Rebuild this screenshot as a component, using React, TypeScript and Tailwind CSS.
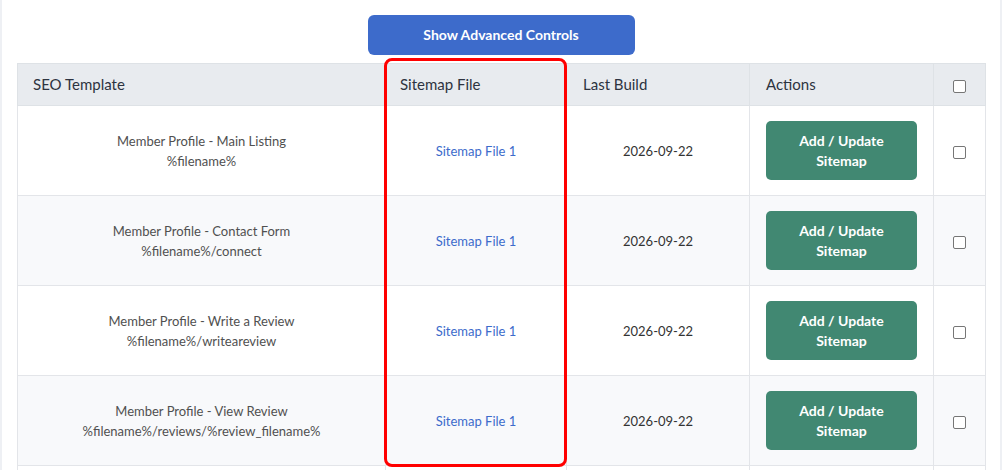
import React from "react";

const rows = [
  { name: "Member Profile - Main Listing", path: "%filename%" },
  { name: "Member Profile - Contact Form", path: "%filename%/connect" },
  { name: "Member Profile - Write a Review", path: "%filename%/writeareview" },
  { name: "Member Profile - View Review", path: "%filename%/reviews/%review_filename%" },
];

const Checkbox = () => (
  <span className="inline-block w-[13px] h-[13px] rounded-[2px] border border-[#767676] bg-white align-middle" />
);

const App = () => {
  return (
    <div className="h-[470px] overflow-hidden bg-white border-x-2 border-[#eef0f4] px-[15px] pt-[15px] font-['Lato',sans-serif]">
      <div className="flex justify-center">
        <button className="w-[267px] h-10 bg-[#3d6bcb] rounded-md text-white text-sm font-bold">
          Show Advanced Controls
        </button>
      </div>

      <div className="relative mt-2">
        <table className="w-full table-fixed border-collapse border border-[#dee2e6]">
          <colgroup>
            <col className="w-[368px]" />
            <col className="w-[181px]" />
            <col className="w-[183px]" />
            <col className="w-[184px]" />
            <col className="w-[52px]" />
          </colgroup>
          <thead>
            <tr className="h-[42px] bg-[#e8ebef] text-[#2d3340] text-[15px] text-left">
              <th className="font-normal px-[15px] border border-[#dee2e6]">SEO Template</th>
              <th className="font-normal px-[14px] border border-[#dee2e6]">Sitemap File</th>
              <th className="font-normal px-4 border border-[#dee2e6]">Last Build</th>
              <th className="font-normal px-4 border border-[#dee2e6]">Actions</th>
              <th className="font-normal text-center border border-[#dee2e6]">
                <Checkbox />
              </th>
            </tr>
          </thead>
          <tbody>
            {rows.map((r, i) => (
              <tr
                key={i}
                className={`h-[90px] text-[13px] leading-5 text-center ${i % 2 ? "bg-[#f8f9fb]" : "bg-white"}`}
              >
                <td className="px-4 border border-[#e3e5e9] text-[#505050]">
                  <div>{r.name}</div>
                  <div>{r.path}</div>
                </td>
                <td className="px-3 border border-[#e3e5e9]">
                  <a className="text-[#3d6bcb]">Sitemap File 1</a>
                </td>
                <td className="px-3 border border-[#e3e5e9] text-[#333]">2026-09-22</td>
                <td className="px-4 border border-[#e3e5e9]">
                  <button className="w-full h-[59px] rounded-[5px] bg-[#418872] text-white font-bold text-sm leading-5">
                    Add / Update
                    <br />
                    Sitemap
                  </button>
                </td>
                <td className="border border-[#e3e5e9]">
                  <Checkbox />
                </td>
              </tr>
            ))}
            {/* next row, scrolled out of view */}
            <tr className="h-[90px] bg-white">
              <td className="border border-[#e3e5e9]" />
              <td className="border border-[#e3e5e9]" />
              <td className="border border-[#e3e5e9]" />
              <td className="border border-[#e3e5e9]" />
              <td className="border border-[#e3e5e9]" />
            </tr>
          </tbody>
        </table>

        {/* highlight annotation */}
        <div className="absolute left-[367px] top-[-5px] w-[183px] h-[409px] border-[3px] border-[#ff0000] rounded-lg pointer-events-none" />
      </div>
    </div>
  );
};

export default App;
